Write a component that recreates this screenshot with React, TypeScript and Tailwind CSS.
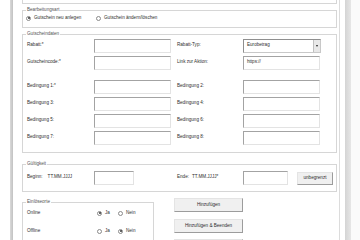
import React from 'react';

type BoxProps = {
  legend: string;
  className?: string;
  children?: React.ReactNode;
};

const GroupBox = ({ legend, className = '', children }: BoxProps) => (
  <div className={`relative shrink-0 border border-[#d6d6d6] ${className}`}>
    <span className="absolute -top-[4px] left-[3px] bg-white px-[1px] leading-[6px] text-[#555]">{legend}</span>
    {children}
  </div>
);

const Field = ({ width = 'w-[77px]', text = '' }: { width?: string; text?: string }) => (
  <div
    className={`h-[14px] ${width} shrink-0 border border-t-[#a3a3a3] border-l-[#a3a3a3] border-r-[#e3e3e3] border-b-[#e3e3e3] bg-white px-[3px] pt-[2px] leading-[6px]`}
  >
    {text}
  </div>
);

const Radio = ({ checked = false, label }: { checked?: boolean; label: string }) => (
  <div className="flex items-center gap-[3px]">
    <span className="flex h-[5px] w-[5px] items-center justify-center rounded-full border border-[#8a8a8a] bg-white">
      {checked && <span className="h-[2px] w-[2px] rounded-full bg-[#333]" />}
    </span>
    <span>{label}</span>
  </div>
);

const Label = ({ text, width }: { text: string; width: string }) => (
  <span className={`${width} shrink-0 -mt-[2px]`}>{text}</span>
);

const Row = ({ left, right, children }: { left: string; right: string; children?: React.ReactNode }) => (
  <div className="flex items-center">
    <Label text={left} width="w-[67px]" />
    <Field />
    <span className="w-[6px] shrink-0" />
    <Label text={right} width="w-[66px]" />
    {children ?? <Field />}
  </div>
);

const Button = ({ label, className = '' }: { label?: string; className?: string }) => (
  <div
    className={`flex h-[14px] w-[69px] shrink-0 items-center justify-center border border-t-[#e4e4e4] border-l-[#e4e4e4] border-r-[#9c9c9c] border-b-[#9c9c9c] bg-[#f0f0f0] ${className}`}
  >
    {label}
  </div>
);

export default function App() {
  return (
    <div className="flex h-[240px] w-[360px] overflow-hidden bg-white font-['Liberation_Sans',Arial,sans-serif] text-[4.6px] leading-[6px] text-[#2e2e2e]">
      <div className="w-[10px] shrink-0" />
      <div className="w-[3px] shrink-0 bg-gradient-to-r from-[#dadada] to-[#c2c2c2]" />

      <main className="flex w-[324px] shrink-0 flex-col pl-[9px]">
        <div className="h-[4px] shrink-0 border-x border-b border-[#d6d6d6]" />

        <GroupBox legend="Bearbeitungsart" className="mt-[6px] h-[18px]">
          <div className="flex pl-[3px] pt-[4px]">
            <div className="w-[70px]">
              <Radio checked label="Gutschein neu anlegen" />
            </div>
            <Radio label="Gutschein ändern/löschen" />
          </div>
        </GroupBox>

        <GroupBox legend="Gutscheindaten" className="mt-[6px] h-[119px]">
          <div className="flex flex-col gap-[3px] pl-[4px] pt-[4px]">
            <Row left="Rabatt:*" right="Rabatt-Typ:">
              <div className="flex h-[14px] w-[78px] shrink-0 border border-t-[#8f8f8f] border-l-[#8f8f8f] border-r-[#c8c8c8] border-b-[#c8c8c8] bg-white">
                <span className="flex-1 px-[3px] pt-[2px]">Eurobetrag</span>
                <span className="flex w-[7px] items-center justify-center border-l border-[#c0c0c0] bg-[#e8e8e8]">
                  <span className="h-0 w-0 border-x-[1.5px] border-t-[2px] border-x-transparent border-t-[#222]" />
                </span>
              </div>
            </Row>
            <Row left="Gutscheincode:*" right="Link zur Aktion:">
              <Field text="https://" />
            </Row>
            <div className="mt-[7px]">
              <Row left="Bedingung 1:*" right="Bedingung 2:" />
            </div>
            <Row left="Bedingung 3:" right="Bedingung 4:" />
            <Row left="Bedingung 5:" right="Bedingung 6:" />
            <Row left="Bedingung 7:" right="Bedingung 8:" />
          </div>
        </GroupBox>

        <GroupBox legend="Gültigkeit" className="mt-[11px] h-[28px]">
          <div className="flex items-center pl-[4px] pt-[6px]">
            <div className="-mt-[2px] flex w-[67px] shrink-0 gap-[5px]">
              <span>Beginn:</span>
              <span>TT.MM.JJJJ</span>
            </div>
            <Field width="w-[40px]" />
            <div className="-mt-[2px] ml-[43px] flex w-[66px] shrink-0 gap-[3px]">
              <span>Ende:</span>
              <span>TT.MM.JJJJ*</span>
            </div>
            <Field width="w-[45px]" />
            <Button label="unbegrenzt" className="ml-[9px] !h-[13px] !w-[36px]" />
          </div>
        </GroupBox>

        <div className="flex items-start">
          <GroupBox legend="Einlöseorte" className="mt-[10px] h-[60px] w-[132px]">
            <div className="flex flex-col gap-[12px] pl-[4px] pt-[7px]">
              <div className="flex">
                <span className="w-[70px]">Online</span>
                <div className="w-[21px]">
                  <Radio checked label="Ja" />
                </div>
                <Radio label="Nein" />
              </div>
              <div className="flex">
                <span className="w-[70px]">Offline</span>
                <div className="w-[21px]">
                  <Radio label="Ja" />
                </div>
                <Radio checked label="Nein" />
              </div>
            </div>
          </GroupBox>
          <div className="ml-[20px] mt-[6px] flex flex-col">
            <Button label="Hinzufügen" />
            <Button label="Hinzufügen & Beenden" className="mt-[7px]" />
            {/* next button only peeks in at the bottom edge */}
            <Button className="mt-[6px]" />
          </div>
        </div>
      </main>

      <div className="w-[2px] shrink-0" />
      <div className="w-px shrink-0 bg-[#dcdcdc]" />
      <div className="w-[5px] shrink-0" />
      <div className="w-[6px] shrink-0 bg-gradient-to-r from-[#d4d4d4] to-[#e6e6e6]" />
      <div className="flex-1 bg-[#fafafa]" />
    </div>
  );
}
